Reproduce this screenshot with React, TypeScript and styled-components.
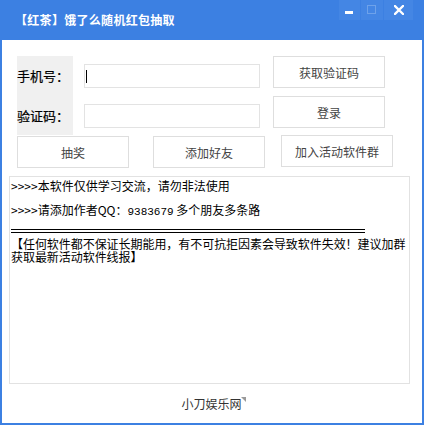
import React from "react";
import styled, { createGlobalStyle } from "styled-components";

const Global = createGlobalStyle`
  html, body { margin: 0; padding: 0; background: #fff; }
  body { font-family: "Noto Sans CJK SC", "Noto Sans", sans-serif; }
  * { box-sizing: border-box; }
`;

const Window = styled.div`
  width: 424px;
  height: 425px;
  background: #3c80e2;
  display: flex;
  flex-direction: column;
  padding: 0 2px 2px 2px;
`;

const TitleBar = styled.div`
  height: 40px;
  flex: none;
  display: flex;
  align-items: flex-start;
  position: relative;
`;

const Title = styled.div`
  color: #fff;
  font-size: 12px;
  font-weight: bold;
  line-height: 40px;
  margin-left: 13px;
  letter-spacing: 0.3px;
`;

const Controls = styled.div`
  margin-left: auto;
  margin-right: 9px;
  display: flex;
  gap: 1px;
`;

const CtrlBtn = styled.div<{ $w: number }>`
  width: ${(p) => p.$w}px;
  height: 20px;
  background: #4486e4;
  display: flex;
  align-items: center;
  justify-content: center;
`;

const Client = styled.div`
  flex: 1;
  background: #fff;
  display: flex;
  flex-direction: column;
`;

const FormRow = styled.div`
  display: flex;
  margin-top: 16px;
  padding-left: 15px;
`;

const LabelPanel = styled.div`
  width: 56px;
  height: 79px;
  background: #f0f0f0;
  display: flex;
  flex-direction: column;
  padding-top: 8px;
  gap: 16px;
`;

const Label = styled.div`
  height: 24px;
  line-height: 24px;
  font-size: 13px;
  color: #000;
  white-space: nowrap;
  -webkit-text-stroke: 0.2px #000;
`;

const Inputs = styled.div`
  display: flex;
  flex-direction: column;
  padding-top: 8px;
  gap: 16px;
  margin-left: 11px;
`;

const Input = styled.div`
  width: 176px;
  height: 24px;
  border: 1px solid #e3e3e3;
  background: #fff;
  display: flex;
  align-items: center;
  padding-left: 1px;
`;

const Caret = styled.span`
  display: block;
  width: 1px;
  height: 13px;
  background: #000;
`;

const SideButtons = styled.div`
  display: flex;
  flex-direction: column;
  gap: 8px;
  margin-left: 13px;
`;

const Button = styled.div<{ $ml?: number; $mt?: number }>`
  width: 112px;
  height: 32px;
  border: 1px solid #dedede;
  background: #fff;
  color: #444;
  font-size: 12px;
  display: flex;
  align-items: center;
  justify-content: center;
  margin-left: ${(p) => p.$ml ?? 0}px;
  margin-top: ${(p) => p.$mt ?? 0}px;
`;

const ActionRow = styled.div`
  display: flex;
  align-items: flex-start;
  padding-left: 15px;
  margin-top: 1px;
`;

const TextBox = styled.div`
  margin: 8px 0 0 7px;
  width: 401px;
  height: 208px;
  border: 1px solid #e2e2e2;
  padding: 1px 1px 0 1px;
  font-size: 12px;
  color: #000;
`;

const Line = styled.div<{ $mt?: number }>`
  line-height: 16px;
  height: 16px;
  white-space: nowrap;
  margin-top: ${(p) => p.$mt ?? 0}px;
`;

const Mono = styled.span`
  font-family: "Liberation Mono", "DejaVu Sans Mono", monospace;
  font-size: 11px;
`;

const DoubleRule = styled.div`
  width: 354px;
  height: 4px;
  border-top: 1px solid #000;
  border-bottom: 1px solid #000;
  margin-top: 11px;
`;

const Notice = styled.div`
  margin-top: 4px;
  line-height: 13px;
  font-size: 12px;
  letter-spacing: -0.05px;
  width: 400px;
`;

const Footer = styled.div`
  flex: 1;
  display: flex;
  align-items: center;
  justify-content: center;
  padding-left: 2px;
`;

const FooterText = styled.span`
  position: relative;
  font-size: 12px;
  color: #333;
  padding-right: 3px;
`;

const Corner = styled.span`
  position: absolute;
  right: -1px;
  top: 2px;
  width: 0;
  height: 0;
  border-top: 5px solid #9a9a9a;
  border-left: 5px solid transparent;
`;

export default function App() {
  return (
    <>
      <Global />
      <Window>
        <TitleBar>
          <Title>【红茶】饿了么随机红包抽取</Title>
          <Controls>
            <CtrlBtn $w={21}>
              <svg width="9" height="9" viewBox="0 0 9 9">
                <rect x="0" y="5" width="8" height="3" fill="#fff" />
              </svg>
            </CtrlBtn>
            <CtrlBtn $w={22}>
              <svg width="10" height="10" viewBox="0 0 10 10">
                <rect x="0.5" y="0.5" width="8" height="8" fill="none" stroke="#6ea2ea" strokeWidth="1" />
              </svg>
            </CtrlBtn>
            <CtrlBtn $w={29}>
              <svg width="10" height="10" viewBox="0 0 10 10">
                <path d="M1 1 L9 9 M9 1 L1 9" stroke="#fff" strokeWidth="2.3" strokeLinecap="square" />
              </svg>
            </CtrlBtn>
          </Controls>
        </TitleBar>
        <Client>
          <FormRow>
            <LabelPanel>
              <Label>手机号：</Label>
              <Label>验证码：</Label>
            </LabelPanel>
            <Inputs>
              <Input>
                <Caret />
              </Input>
              <Input />
            </Inputs>
            <SideButtons>
              <Button>获取验证码</Button>
              <Button>登录</Button>
            </SideButtons>
          </FormRow>
          <ActionRow>
            <Button>抽奖</Button>
            <Button $ml={24}>添加好友</Button>
            <Button $ml={16} $mt={-1}>加入活动软件群</Button>
          </ActionRow>
          <TextBox>
            <Line>&gt;&gt;&gt;&gt;本软件仅供学习交流，请勿非法使用</Line>
            <Line $mt={8}>
              &gt;&gt;&gt;&gt;请添加作者QQ：<Mono>9383679</Mono> 多个朋友多条路
            </Line>
            <DoubleRule />
            <Notice>
              【任何软件都不保证长期能用，有不可抗拒因素会导致软件失效！建议加群获取最新活动软件线报】
            </Notice>
          </TextBox>
          <Footer>
            <FooterText>
              小刀娱乐网
              <Corner />
            </FooterText>
          </Footer>
        </Client>
      </Window>
    </>
  );
}
